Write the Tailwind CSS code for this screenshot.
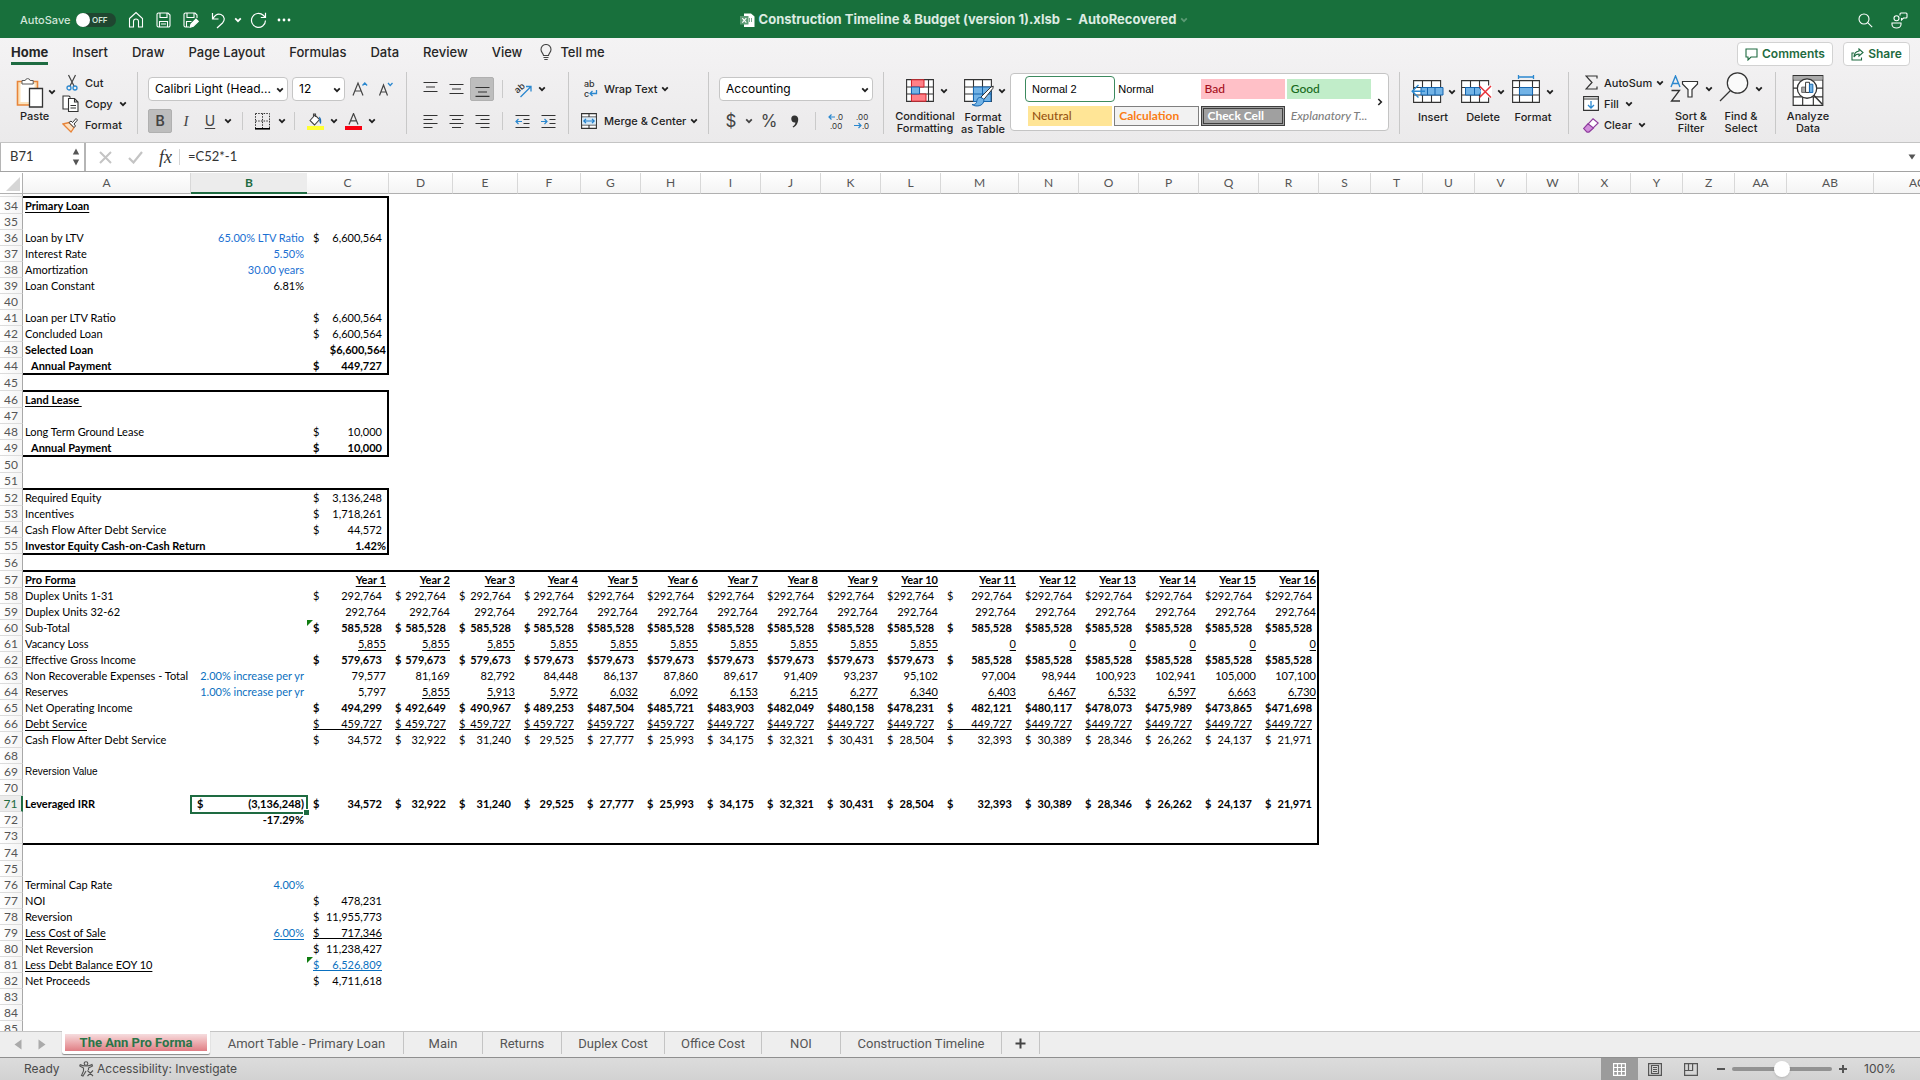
<!DOCTYPE html>
<html lang="en">
<head>
    <meta charset="UTF-8">
    <title>Construction Timeline & Budget (version 1).xlsb</title>
    <script src="https://cdn.jsdelivr.net/npm/@tailwindcss/browser@4"></script>
</head>
<body class="h-screen flex flex-col overflow-hidden bg-white font-['Inter','Liberation_Sans',sans-serif] text-[11px] text-black">

    <!-- shared icon shapes -->
    <svg class="hidden">
        <symbol id="chev" viewBox="0 0 8 6"><path d="M1.2 1.3 4 4.2 6.8 1.3" fill="none" stroke="currentColor" stroke-width="1.7"/></symbol>
    </svg>

    <!-- title bar -->
    <header class="h-[38px] shrink-0 bg-[#18703c] text-white flex items-center justify-between px-3 pt-0.5">
        <div class="flex-1 flex items-center pl-2">
            <label for="autosave" class="text-[#d3e6da] font-medium w-14">AutoSave</label>
            <button id="autosave" class="w-10 h-3.5 rounded-full bg-[#1f4630] flex items-center text-[8px] font-semibold text-[#d3e6da]"><span class="size-3.5 rounded-full bg-white mr-0.5"></span>OFF</button>
            <button aria-label="Home" class="ml-3"><svg width="16" height="18" viewBox="0 0 16 18" fill="none" stroke="#fff" stroke-width="1.1"><path d="M1.5 7.5 8 1.5l6.500 6V16h-4v-5.500a2.500 2.500 0 0 0-5 0V16h-4z"/></svg></button>
            <button aria-label="Save" class="ml-3"><svg width="15" height="16" viewBox="0 0 15 16" fill="none" stroke="#fff" stroke-width="1.1"><path d="M1 2.500A1.500 1.500 0 0 1 2.500 1H12l2 2v10.500a1.500 1.500 0 0 1-1.500 1.500h-10A1.500 1.500 0 0 1 1 13.500zM4 1v4.500h7V1M3.500 15V9.500h8V15M5 12h5"/></svg></button>
            <button aria-label="Save As" class="ml-3"><svg width="16" height="16" viewBox="0 0 16 16" fill="none" stroke="#fff" stroke-width="1.1"><path d="M6 15H2.500A1.500 1.500 0 0 1 1 13.500v-11A1.500 1.500 0 0 1 2.500 1H12l2 2v3M4 1v4.500h7V1M3.500 15V9.500h5"/><path d="m7 15.300 1-3.300 5-5 2.300 2.300-5 5z" fill="#fff"/></svg></button>
            <button aria-label="Undo" class="ml-3"><svg width="15" height="17" viewBox="0 0 15 17" fill="none" stroke="#fff" stroke-width="1.2"><path d="M1.500 1v6H7.500M1.800 6.700C4 3 7 1.300 10 2.500c4 1.700 4 6 1.500 8.500L6 16"/></svg></button>
            <button aria-label="Undo list" class="ml-2"><svg width="8" height="6"><use href="#chev"/></svg></button>
            <button aria-label="Redo" class="ml-2"><svg width="17" height="17" viewBox="0 0 17 17" fill="none" stroke="#fff" stroke-width="1.200"><path d="M15.500 8.500a7 7 0 1 1-2.200-5.200L15 5M15.500.800V5.500H10.800"/></svg></button>
            <button aria-label="More" class="ml-2.5"><svg width="14" height="4" fill="#fff"><circle cx="2" cy="2" r="1.400"/><circle cx="7" cy="2" r="1.400"/><circle cx="12" cy="2" r="1.400"/></svg></button>
        </div>
        <div class="flex items-center gap-1 text-[13px] font-bold text-[#dcebe1]">
            <svg width="15" height="15" viewBox="0 0 15 15"><path d="M4 .5h7l3.500 3V14H4z" fill="#fff"/><path d="M9.500 5v4M11.500 5v4" stroke="#7aaa8c"/><rect y="3" width="8.500" height="8.500" fill="#5d9b75"/><path d="m2.300 5.200 4 4.500m0-4.500-4 4.500" stroke="#fff" stroke-width="1.100"/></svg>
            <h1 class="whitespace-pre">Construction Timeline &amp; Budget (version 1).xlsb  -  AutoRecovered</h1>
            <svg width="8" height="6" class="text-[#5d9b75]"><use href="#chev"/></svg>
        </div>
        <div class="flex-1 flex items-center justify-end gap-[18px]">
            <button aria-label="Search"><svg width="15" height="15" viewBox="0 0 15 15" fill="none" stroke="#fff" stroke-width="1.100"><circle cx="6" cy="6" r="5"/><path d="m9.700 9.700 4.500 4.500"/></svg></button>
            <button aria-label="Presence"><svg width="17" height="17" viewBox="0 0 17 17" fill="none" stroke="#fff" stroke-width="1.100"><circle cx="5.500" cy="6.300" r="2.500"/><path d="M1 11h9v1.500a4.500 3.500 0 0 1-9 0zM9 3.500V2a1 1 0 0 1 1-1h5a1 1 0 0 1 1 1v3a1 1 0 0 1-1 1h-2.500L10.500 8V6"/></svg></button>
        </div>
    </header>

    <!-- ribbon -->
    <section class="shrink-0 bg-linear-to-b from-[#f4f3f4] to-[#ebeaeb] border-b border-[#c4c4c4] pb-2">
        <div class="h-[34px] flex items-start justify-between pl-[11px] pr-2.5">
            <nav class="flex gap-6 text-[13px] font-medium text-[#262626] leading-[20px] pt-1">
                <a href="#" class="font-bold border-b-3 border-[#1e6b41]">Home</a>
                <a href="#">Insert</a>
                <a href="#">Draw</a>
                <a href="#">Page Layout</a>
                <a href="#">Formulas</a>
                <a href="#">Data</a>
                <a href="#">Review</a>
                <a href="#">View</a>
                <a href="#" class="flex items-start gap-2 -ml-1.5"><svg width="12" height="17" viewBox="0 0 12 17" fill="none" stroke="#444" stroke-width="1.100" class="mt-0.5"><path d="M3.500 11.500c0-2-2.500-3-2.500-6a5 5 0 0 1 10 0c0 3-2.500 4-2.500 6zM3.500 13.500h5M4.300 15.500h3.400"/></svg>Tell me</a>
            </nav>
            <div class="flex gap-2.5 pt-1 text-[12px] font-semibold text-[#1e6b41]">
                <button class="h-6 w-24 bg-white border border-[#d2d2d2] rounded flex items-center justify-center gap-1"><svg width="13" height="13" viewBox="0 0 13 13" fill="none" stroke="currentColor" stroke-width="1.100"><path d="M1 1h11v8H6l-3 3V9H1z"/></svg>Comments</button>
                <button class="h-6 w-[67px] bg-white border border-[#d2d2d2] rounded flex items-center justify-center gap-1"><svg width="13" height="13" viewBox="0 0 13 13" fill="none" stroke="currentColor" stroke-width="1.100"><path d="M3 5H1v7h9.500V9.500M8 1l4 3.500L8 8V6c-2.500 0-4 .800-5 3 0-3.500 2-5.500 5-6z"/></svg>Share</button>
            </div>
        </div>

        <div class="h-[62px] flex text-[#1f1f1f] leading-3 font-medium">
            <!-- clipboard -->
            <div class="w-[138px] shrink-0 flex border-r border-[#c8c8c8] pl-4">
                <button class="w-[46px] flex flex-col items-start pt-1">
                    <span class="flex items-center gap-1"><svg width="28" height="32" viewBox="0 0 28 32"><path d="M1.500 5.500h20V29h-20z" fill="#fbe3bd" stroke="#e8853a" stroke-width="1.600"/><path d="M4.500 8h14v18h-14z" fill="#fff"/><path d="M6 8V4.500h3.200a2.600 2.600 0 0 1 5 0h3V8z" fill="#fff" stroke="#5a5a5a"/><path d="M13.500 12.500h13V31h-13z" fill="#fff" stroke="#333" stroke-width="1.300"/></svg><svg width="8" height="6"><use href="#chev"/></svg></span>
                    <span class="pl-1 pt-0.5">Paste</span>
                </button>
                <div class="flex flex-col gap-1 items-start pt-0.5">
                    <button class="flex items-center h-[18px]"><span class="w-[23px] pl-1"><svg width="12" height="17" viewBox="0 0 12 17" fill="none"><path d="m2.500 1 5.500 11M9.500 1 4 12" stroke="#444" stroke-width="1.200"/><circle cx="3" cy="14" r="2" stroke="#2b88cf" stroke-width="1.300"/><circle cx="9" cy="14" r="2" stroke="#2b88cf" stroke-width="1.300"/></svg></span>Cut</button>
                    <button class="flex items-center h-[18px]"><span class="w-[23px]"><svg width="17" height="17" viewBox="0 0 17 17" fill="#fff" stroke="#333" stroke-width="1.100"><path d="M6 14H1V1h6l1.500 1.500"/><path d="M6.500 3.500h6l3.500 3.500v9.500H6.500zM12.500 3.500V7H16M8.500 10.500H14M8.500 13H14"/></svg></span>Copy<svg width="8" height="6" class="ml-1.5"><use href="#chev"/></svg></button>
                    <button class="flex items-center h-[18px]"><span class="w-[23px]"><svg width="17" height="16" viewBox="0 0 17 16"><path d="m1 7 6-1.500 5 5L9 15z" fill="#fde0c0" stroke="#e8853a" stroke-width="1.300"/><path d="m7 5.500 2-1.500 1.500 1.500L14 1.500l1.500 1.500-3.500 4L13.500 9l-1.500 1.500z" fill="#fff" stroke="#333"/></svg></span>Format</button>
                </div>
            </div>

            <!-- font -->
            <div class="w-[269px] shrink-0 flex flex-col justify-between border-r border-[#c8c8c8] pl-2.5 pt-[5px] pb-px">
                <div class="flex items-center h-6">
                    <div class="relative"><select aria-label="Font" class="appearance-none w-[140px] h-6 bg-white border border-[#c6c6c6] rounded-sm pl-1.5 text-[12px] leading-5 font-normal text-black"><option>Calibri Light (Head...</option></select><svg width="8" height="6" class="absolute right-1 top-2.5"><use href="#chev"/></svg></div>
                    <div class="relative ml-1"><select aria-label="Font size" class="appearance-none w-[53px] h-6 bg-white border border-[#c6c6c6] rounded-sm pl-1.5 text-[12px] leading-5 font-normal text-black"><option>12</option></select><svg width="8" height="6" class="absolute right-1 top-2.5"><use href="#chev"/></svg></div>
                    <button aria-label="Increase font size" class="ml-[7px]"><svg width="16" height="16" viewBox="0 0 16 16" fill="none"><path d="M1 14.500 6 2l5 12.500M2.800 10h6.400" stroke="#444" stroke-width="1.200"/><path d="m10.500 4.500 2.300-2.500 2.300 2.500" stroke="#2b88cf" stroke-width="1.300"/></svg></button>
                    <button aria-label="Decrease font size" class="ml-2.5"><svg width="16" height="16" viewBox="0 0 16 16" fill="none"><path d="M1.500 14.500 5.500 4l4 10.500M3 11h5" stroke="#444" stroke-width="1.200"/><path d="m10 2 2.200 2.500L14.500 2" stroke="#2b88cf" stroke-width="1.300"/></svg></button>
                </div>
                <div class="flex items-center h-6">
                    <button class="size-6 rounded-xs bg-[#bdbdbd] border border-[#b0b0b0] text-[14px] leading-5 font-semibold text-[#444]">B</button>
                    <button class="w-[28px] text-[15px] leading-5 italic text-[#444] font-['Liberation_Serif',serif]">I</button>
                    <button class="w-5 text-[14px] leading-5 font-normal text-[#444] underline underline-offset-2">U</button>
                    <button aria-label="Underline style" class="ml-1"><svg width="8" height="6"><use href="#chev"/></svg></button>
                    <span class="w-px h-[18px] bg-[#cacaca] ml-2.5"></span>
                    <button aria-label="Borders" class="ml-3"><svg width="15" height="17" viewBox="0 0 15 17" fill="none" stroke="#333"><path d="M.5.500h14V15M.5.500V15M7.500.500V15M.5 8h14" stroke-dasharray="1.500 1.200"/><path d="M0 15.800h15" stroke="#000" stroke-width="1.600"/></svg></button>
                    <button aria-label="Border style" class="ml-2"><svg width="8" height="6"><use href="#chev"/></svg></button>
                    <span class="w-px h-[18px] bg-[#cacaca] ml-2"></span>
                    <button aria-label="Fill colour" class="ml-3"><svg width="17" height="17" viewBox="0 0 17 17"><path d="M0 13h17v4H0z" fill="#ffff33"/><path d="m3 7.500 5-5.500 4.500 4.500L7.500 12zM6.500 3.500V1h2v3" fill="#fff" stroke="#444" stroke-width="1.100"/><path d="M12 3.500c2.500 1.500 2.500 4 2 7.500-2-1-1.500-3-2-7.500z" fill="#1f6fb5"/></svg></button>
                    <button aria-label="Fill colours" class="ml-1.5"><svg width="8" height="6"><use href="#chev"/></svg></button>
                    <button aria-label="Font colour" class="ml-[7px]"><svg width="17" height="17" viewBox="0 0 17 17"><path d="M0 13h17v4H0z" fill="#f80010"/><path d="m4 11.500 4.500-11 4.500 11M5.600 7.800h5.800" fill="none" stroke="#444" stroke-width="1.200"/></svg></button>
                    <button aria-label="Font colours" class="ml-1.5"><svg width="8" height="6"><use href="#chev"/></svg></button>
                </div>
            </div>

            <!-- alignment -->
            <div class="w-[162px] shrink-0 flex flex-col justify-between border-r border-[#c8c8c8] pl-[11px] pt-[5px] pb-px">
                <div class="flex items-center h-6">
                    <button aria-label="Top align" class="w-6 h-6 flex justify-center items-center"><svg width="15" height="16" stroke="#333" stroke-width="1.200"><path d="M.5 1.500h14M3 6h9M.5 10.500h14"/></svg></button>
                    <button aria-label="Middle align" class="w-6 h-6 flex justify-center items-center ml-0.5"><svg width="15" height="16" stroke="#333" stroke-width="1.200"><path d="M.5 3.500h14M3 8h9M.5 12.500h14"/></svg></button>
                    <button aria-label="Bottom align" class="w-6 h-6 flex justify-center items-center ml-0.5 bg-[#bdbdbd] border border-[#b0b0b0] rounded-xs"><svg width="15" height="16" stroke="#333" stroke-width="1.200"><path d="M.5 6.500h14M3 11h9M.5 15.300h14"/></svg></button>
                    <span class="w-px h-[18px] bg-[#cacaca] ml-2"></span>
                    <button aria-label="Orientation" class="ml-3"><svg width="17" height="17" viewBox="0 0 17 17" fill="none" class="overflow-visible"><text x="0" y="10" font-size="9" fill="#333" transform="rotate(-42 5 8)">ab</text><path d="M5.500 16 15.500 6M11 5.500h5v5" stroke="#2b88cf" stroke-width="1.300"/></svg></button>
                    <button aria-label="Orientations" class="ml-1.5"><svg width="8" height="6"><use href="#chev"/></svg></button>
                </div>
                <div class="flex items-center h-6">
                    <button aria-label="Align left" class="w-6 flex justify-center"><svg width="15" height="15" stroke="#333" stroke-width="1.200"><path d="M.5 1.500h14M.5 5.500h9M.5 9.500h14M.5 13.500h9"/></svg></button>
                    <button aria-label="Center" class="w-6 flex justify-center ml-0.5"><svg width="15" height="15" stroke="#333" stroke-width="1.200"><path d="M.5 1.500h14M3 5.500h9M.5 9.500h14M3 13.500h9"/></svg></button>
                    <button aria-label="Align right" class="w-6 flex justify-center ml-0.5"><svg width="15" height="15" stroke="#333" stroke-width="1.200"><path d="M.5 1.500h14M5.500 5.500h9M.5 9.500h14M5.500 13.500h9"/></svg></button>
                    <span class="w-px h-[18px] bg-[#cacaca] ml-2"></span>
                    <button aria-label="Decrease indent" class="ml-3"><svg width="15" height="15" fill="none"><path d="M.5 1.500h14M8.500 5.500h6M8.500 9.500h6M.5 13.500h14" stroke="#333" stroke-width="1.200"/><path d="M7 7.500H1M3.500 5 1 7.500 3.500 10" stroke="#2b88cf" stroke-width="1.200"/></svg></button>
                    <button aria-label="Increase indent" class="ml-[11px]"><svg width="15" height="15" fill="none"><path d="M.5 1.500h14M8.500 5.500h6M8.500 9.500h6M.5 13.500h14" stroke="#333" stroke-width="1.200"/><path d="M0 7.500h6M3.500 5 6 7.500 3.500 10" stroke="#2b88cf" stroke-width="1.200"/></svg></button>
                </div>
            </div>

            <!-- wrap / merge -->
            <div class="w-[140px] shrink-0 flex flex-col justify-between border-r border-[#c8c8c8] pl-3 pt-[5px] pb-px">
                <button class="flex items-center h-6"><span class="w-[23px] pl-0.5"><svg width="16" height="16" viewBox="0 0 16 16" fill="none" class="overflow-visible"><text x="1" y="6" font-size="9" fill="#333">ab</text><text x="1" y="16" font-size="9" fill="#333">c</text><path d="M13.500 9V12.500H7M9.500 10 7 12.500 9.500 15" stroke="#2b88cf" stroke-width="1.300"/></svg></span>Wrap Text<svg width="8" height="6" class="ml-1"><use href="#chev"/></svg></button>
                <button class="flex items-center h-6"><span class="w-[23px]"><svg width="16" height="16" viewBox="0 0 16 16" fill="none"><path d="M.600.600h14.800v14.800H.600zM.600 4h14.800M.600 12h14.800M8 .600V4M8 12v3.400" fill="#fff" stroke="#333" stroke-width="1.100"/><path d="M1.200 4.500h13.600v7H1.200z" fill="#d4e9f8"/><path d="M3 8h10M5 5.800 2.800 8 5 10.200M11 5.800 13.200 8 11 10.200" stroke="#1f7fcb" stroke-width="1.200"/></svg></span>Merge &amp; Center<svg width="8" height="6" class="ml-1"><use href="#chev"/></svg></button>
            </div>

            <!-- number -->
            <div class="w-[175px] shrink-0 flex flex-col justify-between border-r border-[#c8c8c8] px-2.5 pt-[5px] pb-px">
                <div class="relative"><select aria-label="Number format" class="appearance-none w-full h-6 bg-white border border-[#c6c6c6] rounded-sm pl-1.5 text-[12px] leading-5 font-normal text-black"><option>Accounting</option></select><svg width="8" height="6" class="absolute right-1 top-2.5"><use href="#chev"/></svg></div>
                <div class="flex items-center h-6 text-[#444] font-normal leading-5">
                    <button class="w-6 text-[17px]">$</button>
                    <button aria-label="Currency" class="ml-0.5"><svg width="8" height="6"><use href="#chev"/></svg></button>
                    <button class="ml-1.5 w-5 text-[17px]">%</button>
                    <button aria-label="Comma style" class="ml-[11px]"><svg width="9" height="13" viewBox="0 0 9 13"><path d="M4.300.500a3.500 3.500 0 0 1 3.900 3.800c0 4-2.200 7-5 8.200l-.600-.900c1.700-1 2.700-2.500 2.800-4.100A3.500 3.500 0 1 1 4.300.500z" fill="#333"/></svg></button>
                    <span class="w-px h-[18px] bg-[#cacaca] ml-4"></span>
                    <button aria-label="Increase decimal" class="ml-3"><svg width="16" height="17" viewBox="0 0 16 17" fill="none" class="overflow-visible"><text x="8" y="7" font-size="8" fill="#333">.0</text><text x="2" y="16" font-size="8" fill="#333">.00</text><path d="M7 4H1M3.500 1.500 1 4l2.500 2.500" stroke="#2b88cf" stroke-width="1.200"/></svg></button>
                    <button aria-label="Decrease decimal" class="ml-2.5"><svg width="16" height="17" viewBox="0 0 16 17" fill="none" class="overflow-visible"><text x="2" y="7" font-size="8" fill="#333">.00</text><text x="8" y="16" font-size="8" fill="#333">.0</text><path d="M0 12.500h7M4.500 10 7 12.500 4.500 15" stroke="#2b88cf" stroke-width="1.200"/></svg></button>
                </div>
            </div>

            <!-- styles -->
            <div class="w-[516px] shrink-0 flex border-r border-[#c8c8c8] pl-3">
                <button class="w-[58px] flex flex-col items-center pt-[7px] text-center">
                    <span class="flex items-center gap-1.5 h-6 pl-1"><svg width="28" height="23" viewBox="0 0 28 23"><path d="M.600.600h26.800v21.800H.600zM.600 8h26.800M.600 15h26.800M5.500.600v22M13.500.600v22M22.500.600v22" fill="#fff" stroke="#333" stroke-width="1.100"/><path d="M5.500.800H18V8H5.500zM5.500 15H20v7.200H5.500z" fill="#ff8087" stroke="#d3232b"/><path d="M5.500 8h8v7h-8z" fill="#72b3e6" stroke="#1565ae"/></svg><svg width="8" height="6"><use href="#chev"/></svg></span>
                    <span class="pt-2">Conditional Formatting</span>
                </button>
                <button class="w-[58px] flex flex-col items-center pt-[7px] text-center">
                    <span class="flex items-center gap-1 h-6 pl-1"><svg width="30" height="28" viewBox="0 0 30 28" class="mt-1"><path d="M.600.600h26.800v21.800H.600zM.600 8h26.800M.600 15h26.800M9.500.600v22M18.500.600v22" fill="#fff" stroke="#333" stroke-width="1.100"/><path d="M9.500 8H27v14.500H9.500z" fill="#72b3e6" stroke="#1565ae"/><path d="M18.500 8v14M9.500 15H27" stroke="#1565ae"/><path d="M17 18 27 8l2.300-.800-.500 2.300-9 11z" fill="#fff" stroke="#333"/><path d="M17 18.500c-4-.500-4 3-4.500 5-.800 1.800-2.500 2.300-4.500 2 3 2.500 12 2.500 12-5z" fill="#72b3e6" stroke="#1565ae"/></svg><svg width="8" height="6"><use href="#chev"/></svg></span>
                    <span class="pt-2">Format<br>as Table</span>
                </button>
                <div class="ml-[-2px] mt-px w-[379px] h-[58px] bg-white border border-[#c4c4c4] rounded-sm flex items-center pl-[17px] font-['Lato',sans-serif] text-[12px]">
                    <div class="grid grid-cols-4 gap-x-0.5 gap-y-[7px] w-[343px] [&>button]:h-5 [&>button]:text-left [&>button]:pl-1">
                        <button class="outline-1 outline-[#3c8a5e] outline-offset-2 rounded-[1px] text-[11px] text-black font-['Liberation_Sans',sans-serif]">Normal 2</button>
                        <button class="text-[11px] text-black font-['Liberation_Sans',sans-serif]">Normal</button>
                        <button class="bg-[#ffc0c7] text-[#a50f20]">Bad</button>
                        <button class="bg-[#c1edc9] text-[#176a20]">Good</button>
                        <button class="bg-[#ffe596] text-[#975310]">Neutral</button>
                        <button class="bg-[#f2f2f2] border border-[#7f7f7f] text-[#fa7d14] font-bold">Calculation</button>
                        <button class="bg-[#a0a0a0] border-3 border-double border-[#3f3f3f] text-white font-bold leading-3">Check Cell</button>
                        <button class="text-[#7f7f7f] italic">Explanatory T...</button>
                    </div>
                    <button aria-label="More styles" class="ml-1.5"><svg width="6" height="8" viewBox="0 0 6 8"><path d="M1.300 1 4.300 4l-3 3" fill="none" stroke="#222" stroke-width="1.600"/></svg></button>
                </div>
            </div>

            <!-- cells -->
            <div class="w-[169px] shrink-0 flex border-r border-[#c8c8c8] pl-2 text-center">
                <button class="w-[50px] flex flex-col items-center">
                    <span class="flex items-end gap-1 h-[31px]"><svg width="33" height="23" viewBox="0 0 33 23"><path d="M2.600.600h27v21.800h-27zM2.600 7.500h27M2.600 15h27M11.500.600v22M20.500.600v22" fill="#fff" stroke="#333" stroke-width="1.100"/><path d="M10 7.500h22V15H10z" fill="#72b3e6" stroke="#1565ae"/><path d="M16.500 7.500V15M24 7.500V15" stroke="#1565ae"/><path d="M14 11.200H1.500M7.500 5l-6.300 6.200 6.300 6.200" fill="none" stroke="#2b88cf" stroke-width="1.400"/></svg><svg width="8" height="6" class="mb-2"><use href="#chev"/></svg></span>
                    <span class="pt-2">Insert</span>
                </button>
                <button class="w-[50px] flex flex-col items-center">
                    <span class="flex items-end gap-1 h-[31px]"><svg width="32" height="23" viewBox="0 0 32 23"><path d="M.600.600h27v21.800h-27zM.600 7.500h27M.600 15h27M9.500.600v22M18.500.600v22" fill="#fff" stroke="#333" stroke-width="1.100"/><path d="M4.500 7.500H18l3 3.700-3 3.800H4.500z" fill="#72b3e6" stroke="#1565ae"/><path d="M13.500 7.500V15" stroke="#1565ae"/><path d="M20 5.500h11v12H20z" fill="#fff"/><path d="m18.500 6 11.500 11.500M30 6 18.500 17.500" stroke="#e8343c" stroke-width="1.500"/></svg><svg width="8" height="6" class="mb-2"><use href="#chev"/></svg></span>
                    <span class="pt-2">Delete</span>
                </button>
                <button class="w-[50px] flex flex-col items-center">
                    <span class="flex items-end gap-1.5 h-[31px]"><svg width="28" height="28" viewBox="0 0 28 28"><path d="M6.500 0v4M21.500 0v4M6.500 2h15" stroke="#2b88cf" stroke-width="1.300"/><path d="M.600 5.600h26.800v21.800H.600zM.600 12.500h26.800M.600 20h26.800M7.500 5.600v22M20.500 5.600v22" fill="#fff" stroke="#333" stroke-width="1.100"/><path d="M7.500 12.500h13V20h-13z" fill="#72b3e6" stroke="#1565ae"/></svg><svg width="8" height="6" class="mb-2"><use href="#chev"/></svg></span>
                    <span class="pt-2">Format</span>
                </button>
            </div>

            <!-- editing -->
            <div class="w-[207px] shrink-0 flex border-r border-[#c8c8c8] pl-3.5">
                <div class="w-[83px] flex flex-col gap-1 items-start pt-0.5">
                    <button class="flex items-center h-[18px]"><span class="w-[21px] pl-0.5"><svg width="13" height="15" viewBox="0 0 13 15" fill="none" stroke="#333" stroke-width="1.200"><path d="M12 3.500V1H1l6 6.500L1 14h11v-2.500"/></svg></span>AutoSum<svg width="8" height="6" class="ml-1"><use href="#chev"/></svg></button>
                    <button class="flex items-center h-[18px]"><span class="w-[21px]"><svg width="16" height="15" viewBox="0 0 16 15" fill="none"><path d="M.600.600h14.800v13.800H.600zM.600 3h14.800" fill="#fff" stroke="#333" stroke-width="1.100"/><path d="M8 5v7M5 9l3 3 3-3" stroke="#2b88cf" stroke-width="1.300"/></svg></span>Fill<svg width="8" height="6" class="ml-1.5"><use href="#chev"/></svg></button>
                    <button class="flex items-center h-[18px]"><span class="w-[21px]"><svg width="16" height="15" viewBox="0 0 16 15"><path d="M10 .800 15.200 5 6 14H4L.800 10.500z" fill="#fff" stroke="#8e3a9d" stroke-width="1.100"/><path d="M5 5.800 10.500 10 6 14H4L.800 10.500z" fill="#d18edb" stroke="#8e3a9d" stroke-width="1.100"/></svg></span>Clear<svg width="8" height="6" class="ml-1.5"><use href="#chev"/></svg></button>
                </div>
                <button class="w-[50px] flex flex-col items-center text-center">
                    <span class="flex items-end gap-1.5 h-[31px]"><svg width="29" height="27" viewBox="0 0 29 27" fill="none"><path d="m1 12 4.500-11L10 12M2.500 8.500h6" stroke="#2b88cf" stroke-width="1.400"/><path d="M1.500 15.500h8l-8 10.500h8.500" stroke="#333" stroke-width="1.300"/><path d="M12.500 6.500h15V9L22 14.500V22h-4v-7.500L12.500 9z" fill="#fff" stroke="#333" stroke-width="1.200"/></svg><svg width="8" height="6" class="mb-2.5"><use href="#chev"/></svg></span>
                    <span class="pt-2">Sort &amp;<br>Filter</span>
                </button>
                <button class="w-[50px] flex flex-col items-center text-center">
                    <span class="flex items-end gap-1.5 h-[31px]"><svg width="30" height="30" viewBox="0 0 30 30" fill="none" stroke="#333" stroke-width="1.200"><circle cx="18.500" cy="11" r="10.200" fill="#fafafa"/><path d="M11.500 18.500 1 29"/></svg><svg width="8" height="6" class="mb-2.5"><use href="#chev"/></svg></span>
                    <span class="pt-2">Find &amp;<br>Select</span>
                </button>
            </div>

            <!-- analysis -->
            <button class="w-16 flex flex-col items-center pt-[3px] text-center">
                <svg width="32" height="32" viewBox="0 0 32 32"><path d="M.700.700h30.600v30.600H.700zM.700 5h30.600M.700 13.500h30.600M.700 22.500h30.600M10.500 22v9M21.500 22v9" fill="#fff" stroke="#333" stroke-width="1.200"/><path d="M1 1h30v4H1z" fill="#aaa"/><circle cx="15" cy="14" r="10" fill="#fff" stroke="#333" stroke-width="1.300"/><path d="m22 21 9 9.500" stroke="#333" stroke-width="1.500"/><path d="M9.500 12.500h4V18h-4z" fill="#aaa" stroke="#666"/><path d="M13.500 7.500h4V18h-4z" fill="#fff" stroke="#333"/><path d="M17.500 9.500h3.500V18h-3.500z" fill="#72b3e6" stroke="#1565ae"/></svg>
                <span class="pt-1">Analyze<br>Data</span>
            </button>
        </div>
    </section>

    <!-- formula bar -->
    <section class="h-[29px] shrink-0 flex items-center bg-white border-b border-[#a3a3a3] text-[#333]">
        <div class="w-[86px] h-full border-r-2 border-l border-[#b5b5b5] flex items-center pl-[9px] pr-1">
            <input aria-label="Name box" value="B71" class="flex-1 min-w-0 font-['Lato',sans-serif] text-[13px]">
            <svg width="8" height="20" fill="#555"><path d="M4 1.500 7.200 7.500H.800zM4 18.500.800 12.500h6.400z"/></svg>
        </div>
        <button aria-label="Cancel" class="ml-[13px]"><svg width="13" height="13" stroke="#c4c4c4" stroke-width="2"><path d="m1 1 11 11M12 1 1 12"/></svg></button>
        <button aria-label="Enter" class="ml-4"><svg width="15" height="13" fill="none" stroke="#c4c4c4" stroke-width="2.200"><path d="m1 7 4.500 4.500L14 1"/></svg></button>
        <button aria-label="Insert function" class="ml-4 text-[18px] leading-5 italic font-['Liberation_Serif',serif]">fx</button>
        <span class="w-px h-4 bg-[#d5d5d5] ml-[7px]"></span>
        <input aria-label="Formula" value="=C52*-1" class="flex-1 pl-2 font-['Lato',sans-serif] text-[13px]">
        <button aria-label="Expand formula bar" class="pr-1"><svg width="8" height="6" fill="#555"><path d="M.500.500h7L4 5.500z"/></svg></button>
    </section>

    <!-- grid -->
    <main class="flex-1 min-h-0 overflow-hidden border-t border-white">
        <table class="table-fixed w-px border-separate border-spacing-0 font-['Lato',sans-serif] text-[11px] leading-4 whitespace-nowrap">
            <colgroup id="cols"></colgroup>
            <thead id="head"></thead>
            <tbody id="body"></tbody>
        </table>
    </main>

    <!-- sheet tabs -->
    <nav class="h-[26px] shrink-0 flex items-start bg-[#eeeeee] border-t border-[#c4c4c4] font-['Roboto','Liberation_Sans',sans-serif] text-[13px] text-[#555]">
        <div class="w-[62px] h-[25px] flex items-center pl-3.5 gap-4">
            <button aria-label="Previous sheet"><svg width="8" height="11" fill="#aaa"><path d="M7.500.500v10L.500 5.500z"/></svg></button>
            <button aria-label="Next sheet"><svg width="8" height="11" fill="#aaa"><path d="M.500.500v10l7-5z"/></svg></button>
        </div>
        <a href="#" class="-mt-px w-[148px] h-[23px] bg-white p-[3px] rounded-b-xs shadow-[0_1px_1px_#888]"><span class="block h-[17px] leading-[18px] text-center font-bold text-[#2a7549] bg-linear-to-b from-[#f5dcde] to-[#df7d84]">The Ann Pro Forma</span></a>
        <a href="#" class="w-[194px] h-[22px] leading-[24px] text-center border-r border-[#c4c4c4]">Amort Table - Primary Loan</a>
        <a href="#" class="w-[79px] h-[22px] leading-[24px] text-center border-r border-[#c4c4c4]">Main</a>
        <a href="#" class="w-[79px] h-[22px] leading-[24px] text-center border-r border-[#c4c4c4]">Returns</a>
        <a href="#" class="w-[103px] h-[22px] leading-[24px] text-center border-r border-[#c4c4c4]">Duplex Cost</a>
        <a href="#" class="w-[97px] h-[22px] leading-[24px] text-center border-r border-[#c4c4c4]">Office Cost</a>
        <a href="#" class="w-[79px] h-[22px] leading-[24px] text-center border-r border-[#c4c4c4]">NOI</a>
        <a href="#" class="w-[161px] h-[22px] leading-[24px] text-center border-r border-[#c4c4c4]">Construction Timeline</a>
        <button aria-label="New sheet" class="w-[38px] h-[22px] border-r border-[#c4c4c4] flex items-center justify-center"><svg width="11" height="11" stroke="#444" stroke-width="2"><path d="M5.500.500v10M.500 5.500h10"/></svg></button>
    </nav>

    <!-- status bar -->
    <footer class="h-[23px] shrink-0 flex items-center bg-linear-to-b from-[#dcdcdc] to-[#d2d2d2] border-t border-[#8f8f8f] pl-6 pr-6 text-[12px] text-[#4a4a4a]">
        <span class="w-[55px]">Ready</span>
        <button class="flex items-center gap-[3px]"><svg width="15" height="16" viewBox="0 0 15 16" fill="none" stroke="#555" stroke-width="1.100"><circle cx="7" cy="2.500" r="1.800"/><path d="M1 3.500c3 2 9 2 12 0l.5 1.500L9.500 7v2M1 3.500.800 5 4.500 7v3L2.500 14.500l1.500.5 3-5M8.500 9.500l5.500 5.500M14 9.500 8.500 15"/></svg>Accessibility: Investigate</button>
        <div class="flex-1"></div>
        <button aria-label="Normal view" class="w-[37px] h-[22px] bg-[#9b9b9b] flex items-center justify-center"><svg width="13" height="13" fill="none" stroke="#fff" stroke-width="1.200"><path d="M.600.600h11.800v11.800H.600zM.600 4.500h12M.600 8.500h12M4.500.600v12M8.500.600v12"/></svg></button>
        <button aria-label="Page layout view" class="ml-2.5"><svg width="14" height="13" fill="none" stroke="#555" stroke-width="1.200"><path d="M.600.600h12.800v11.800H.600zM3.500 2.500h7v8h-7zM5 4.500h4M5 6.500h4M5 8.500h4"/></svg></button>
        <button aria-label="Page break view" class="ml-[22px]"><svg width="14" height="13" fill="none" stroke="#555" stroke-width="1.200"><path d="M.600.600h12.800v11.800H.600zM.600 7.500h8V.600M4.500.600v7"/></svg></button>
        <button aria-label="Zoom out" class="ml-[19px]"><svg width="8" height="8" stroke="#555" stroke-width="2"><path d="M0 4h8"/></svg></button>
        <input type="range" aria-label="Zoom" value="50" class="ml-[7px] w-[100px] h-4 appearance-none bg-transparent [&::-webkit-slider-runnable-track]:h-1 [&::-webkit-slider-runnable-track]:rounded-full [&::-webkit-slider-runnable-track]:bg-[#929292] [&::-webkit-slider-thumb]:appearance-none [&::-webkit-slider-thumb]:size-4 [&::-webkit-slider-thumb]:-mt-1.5 [&::-webkit-slider-thumb]:rounded-full [&::-webkit-slider-thumb]:bg-white [&::-webkit-slider-thumb]:shadow-sm">
        <button aria-label="Zoom in" class="ml-[7px]"><svg width="8" height="8" stroke="#555" stroke-width="2"><path d="M0 4h8M4 0v8"/></svg></button>
        <span class="ml-[17px] w-8">100%</span>
    </footer>

    <script>
        const columns = [
            ['A', 168], ['B', 116], ['C', 82], ['D', 64], ['E', 65], ['F', 63],
            ['G', 60], ['H', 60], ['I', 60], ['J', 60], ['K', 60], ['L', 60], ['M', 78],
            ['N', 60], ['O', 60], ['P', 60], ['Q', 60], ['R', 60],
            ['S', 52], ['T', 52], ['U', 52], ['V', 52], ['W', 52], ['X', 52], ['Y', 52], ['Z', 52], ['AA', 52],
            ['AB', 87], ['AC', 87],
        ];

        // rows one pixel taller than the default
        const tallRows = [34, 45, 46, 50, 52, 56, 57, 74];

        // outlined blocks: first row, last row, last column
        const boxes = [[34, 44, 2], [46, 49, 2], [52, 55, 2], [57, 73, 17]];

        const labels = {
            34: ['Primary Loan', 'bu'], 36: ['Loan by LTV'], 37: ['Interest Rate'], 38: ['Amortization'],
            39: ['Loan Constant'], 41: ['Loan per LTV Ratio'], 42: ['Concluded Loan'], 43: ['Selected Loan', 'b'],
            44: ['Annual Payment', 'bi'], 46: ['Land Lease ', 'bu'], 48: ['Long Term Ground Lease'],
            49: ['Annual Payment', 'bi'], 52: ['Required Equity'], 53: ['Incentives'],
            54: ['Cash Flow After Debt Service'], 55: ['Investor Equity Cash-on-Cash Return', 'b'],
            57: ['Pro Forma', 'bu'], 58: ['Duplex Units 1-31'], 59: ['Duplex Units 32-62'], 60: ['Sub-Total'],
            61: ['Vacancy Loss'], 62: ['Effective Gross Income'], 63: ['Non Recoverable Expenses - Total'],
            64: ['Reserves'], 65: ['Net Operating Income'], 66: ['Debt Service', 'u'],
            67: ['Cash Flow After Debt Service'], 69: ['Reversion Value', 'h'], 71: ['Leveraged IRR', 'b'],
            76: ['Terminal Cap Rate'], 77: ['NOI'], 78: ['Reversion'], 79: ['Less Cost of Sale', 'u'],
            80: ['Net Reversion'], 81: ['Less Debt Balance EOY 10', 'u'], 82: ['Net Proceeds'],
        };

        // flags: $ accounting, b bold, u underline, l/L blue, e error marker, s selected
        const cells = {
            B36: ['65.00% LTV Ratio', 'l'], B37: ['5.50%', 'l'], B38: ['30.00 years', 'l'], B39: ['6.81%', ''],
            C36: ['6,600,564', '$'], C41: ['6,600,564', '$'], C42: ['6,600,564', '$'], C43: ['$6,600,564', 'b'],
            C44: ['449,727', '$b'], C48: ['10,000', '$'], C49: ['10,000', '$b'],
            C52: ['3,136,248', '$'], C53: ['1,718,261', '$'], C54: ['44,572', '$'], C55: ['1.42%', 'b'],
            B63: ['2.00% increase per yr', 'L'], B64: ['1.00% increase per yr', 'L'],
            B71: ['(3,136,248)', '$bs'], B72: ['-17.29%', 'b'], B76: ['4.00%', 'L'], B79: ['6.00%', 'Lu'],
            C77: ['478,231', '$'], C78: ['11,955,773', '$'], C79: ['717,346', '$u'], C80: ['11,238,427', '$'],
            C81: ['6,526,809', '$uLe'], C82: ['4,711,618', '$'],
        };

        const series = {
            57: ['bu', Array.from({ length: 16 }, (_, i) => 'Year ' + (i + 1))],
            58: ['$', Array(16).fill('292,764')],
            59: ['', Array(16).fill('292,764')],
            60: ['$b', Array(16).fill('585,528')],
            61: ['u', [...Array(10).fill('5,855'), ...Array(6).fill('0')]],
            62: ['$b', [...Array(10).fill('579,673'), ...Array(6).fill('585,528')]],
            63: ['', '79,577 81,169 82,792 84,448 86,137 87,860 89,617 91,409 93,237 95,102 97,004 98,944 100,923 102,941 105,000 107,100'.split(' ')],
            64: ['u', '5,797 5,855 5,913 5,972 6,032 6,092 6,153 6,215 6,277 6,340 6,403 6,467 6,532 6,597 6,663 6,730'.split(' ')],
            65: ['$b', '494,299 492,649 490,967 489,253 487,504 485,721 483,903 482,049 480,158 478,231 482,121 480,117 478,073 475,989 473,865 471,698'.split(' ')],
            66: ['$u', [...Array(6).fill('459,727'), ...Array(10).fill('449,727')]],
            67: ['$', '34,572 32,922 31,240 29,525 27,777 25,993 34,175 32,321 30,431 28,504 32,393 30,389 28,346 26,262 24,137 21,971'.split(' ')],
        };
        series[71] = ['$b', series[67][1]];

        for (const row in series) {
            const [flags, values] = series[row];
            values.forEach((value, i) => {
                cells[columns[i + 2][0] + row] = [value, flags];
            });
        }
        cells.C60 = ['585,528', '$be'];
        cells.C64 = ['5,797', ''];

        const outline = (row, col) => {
            const line = boxes.some(([first, last, end]) => (row === last || row === first - 1) && col <= end);
            const side = boxes.some(([first, last, end]) => row >= first && row <= last && col === end);
            if (line && side) return 'shadow-[0_1px_0_#000,inset_0_-1px_0_#000,inset_-2px_0_0_#000]';
            if (line) return 'shadow-[0_1px_0_#000,inset_0_-1px_0_#000]';
            if (side) return 'shadow-[inset_-2px_0_0_#000]';
            return '';
        };

        const renderLabel = ([text, flags = '']) => {
            let cls = 'block h-4 whitespace-pre';
            cls += flags.includes('i') ? ' pl-2' : ' pl-0.5';
            if (flags.includes('b')) cls += ' font-bold';
            if (flags.includes('h')) cls += " text-[10px] font-['Liberation_Sans',sans-serif]";
            const inner = flags.includes('u') ? 'underline underline-offset-2' : '';
            return `<span class="${cls}"><span class="${inner}">${text}</span></span>`;
        };

        const renderValue = ([text, flags]) => {
            let cls = 'h-4';
            if (flags.includes('b')) cls += ' font-bold';
            if (flags.includes('l')) cls += ' text-[#1a6fd2]';
            if (flags.includes('L')) cls += ' text-[#0a70c0]';
            let html;
            if (flags.includes('$')) {
                cls += flags.includes('s') ? ' pl-1.5 pr-[3px]' : ' pl-1.5 pr-[7px]';
                const line = flags.includes('u') ? 'h-[14px] border-b border-current' : '';
                html = `<div class="${cls}"><div class="flex justify-between ${line}"><span>$</span><span>${text}</span></div></div>`;
            } else {
                const line = flags.includes('u') ? 'underline underline-offset-2' : '';
                html = `<div class="${cls} text-right pr-[3px]"><span class="${line}">${text}</span></div>`;
            }
            if (flags.includes('e')) html += '<span class="absolute left-0 top-0 size-1.5 bg-[#107c10] [clip-path:polygon(0_0,100%_0,0_100%)]"></span>';
            if (flags.includes('s')) html += '<span class="absolute -inset-px -bottom-0.5 border-2 border-[#1e6b41]"></span><span class="absolute -right-0.5 -bottom-[3px] size-[6px] bg-[#1e6b41] border-t border-l border-white"></span>';
            return html;
        };

        document.getElementById('cols').innerHTML = '<col style="width:23px">' +
            columns.map(([, width]) => `<col style="width:${width}px">`).join('');

        document.getElementById('head').innerHTML = '<tr class="text-[12px] text-[#555]">' +
            '<th class="relative h-[21px] p-0 border-r border-b border-[#b0b0b0]"><span class="absolute right-0.5 bottom-0.5 size-3.5 bg-[#d6d6d6] [clip-path:polygon(100%_0,100%_100%,0_100%)]"></span></th>' +
            columns.map(([name]) => name === 'B'
                ? '<th class="h-[21px] p-0 font-bold text-[#1e6b41] bg-[#ececec] border-b-2 border-[#1e6b41]">B</th>'
                : `<th class="h-[21px] p-0 font-normal bg-linear-to-b from-white to-[#f4f4f4] border-b border-b-[#b0b0b0] border-r border-r-[#d8d8d8]">${name}</th>`).join('') + '</tr>';

        let rows = '';
        for (let row = 33; row <= 85; row++) {
            const height = row === 33 ? 'h-[3px]' : tallRows.includes(row) ? 'h-[17px]' : 'h-4';
            const head = row === 71
                ? 'text-[#1e6b41] bg-[#ececec] border-r-2 border-r-[#1e6b41]'
                : 'text-[#555] bg-linear-to-r from-white to-[#f4f4f4] border-r border-r-[#a8a8a8]';
            rows += `<tr class="${height}"><th class="${height} p-0 leading-[15px] text-[12px] font-normal align-bottom border-b border-b-[#dcdcdc] ${head}">${row === 33 ? '' : row}</th>`;
            columns.forEach(([name], col) => {
                const cell = name === 'A' ? labels[row] && renderLabel(labels[row]) : cells[name + row] && renderValue(cells[name + row]);
                rows += `<td class="relative p-0 align-bottom ${outline(row, col)}">${cell || ''}</td>`;
            });
            rows += '</tr>';
        }
        document.getElementById('body').innerHTML = rows;
    </script>
</body>
</html>
